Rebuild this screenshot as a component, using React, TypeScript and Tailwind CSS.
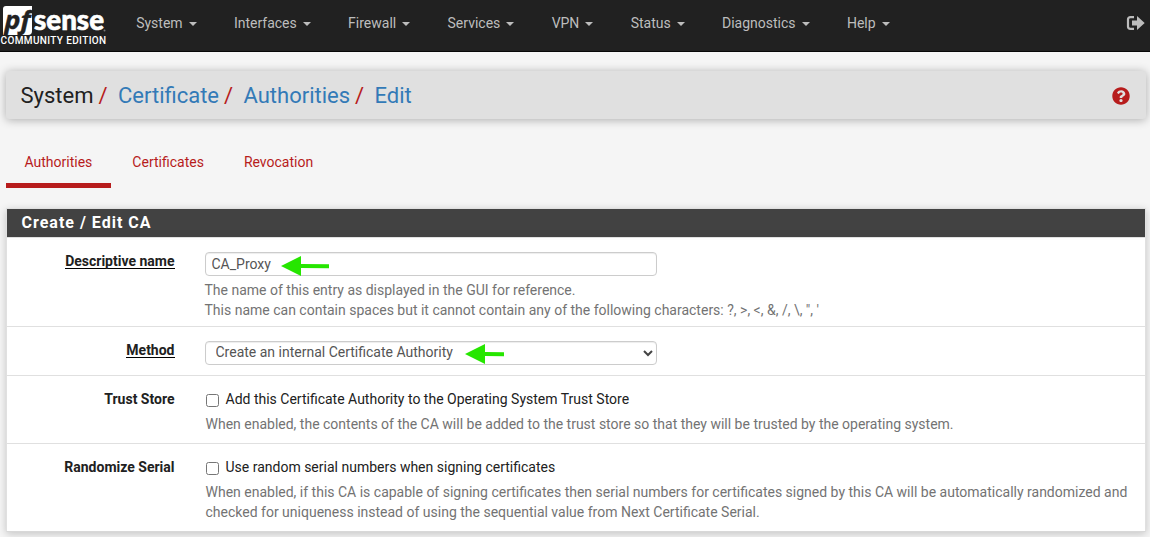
import type { ReactNode } from "react";

const menus = ["System", "Interfaces", "Firewall", "Services", "VPN", "Status", "Diagnostics", "Help"];

function Logo() {
  return (
    <div className="w-[117.500px] shrink-0 pt-[5px]">
      <svg className="block overflow-visible" width="110" height="31" viewBox="0 0 110 31">
        <path d="M6 1H32V26Q32 30 28 30H3V4Q3 1 6 1Z" fill="#fff" />
        <text x="4.500" y="24" fontFamily="Open Sans, sans-serif" fontSize="25" fontWeight="700" fontStyle="italic" fill="#212121" stroke="#212121" strokeWidth="0.400" textLength="26" lengthAdjust="spacingAndGlyphs">pf</text>
        <text x="34" y="24.500" fontFamily="Lato, sans-serif" fontSize="27.500" fontWeight="900" fill="#fff" stroke="#fff" strokeWidth="0.600" textLength="70" lengthAdjust="spacingAndGlyphs">sense</text>
        <circle cx="104.5" cy="25.5" r="1" fill="#777" />
      </svg>
      <div className="whitespace-nowrap pl-[0.500px] text-[10px] font-medium leading-[10px] tracking-[0.370px] text-white">COMMUNITY EDITION</div>
    </div>
  );
}

function Arrow({ className, end }: { className: string; end: number }) {
  return (
    <svg className={className} width="50" height="20" viewBox="0 0 50 20">
      <path d={`M0 10L20 0V8L${end} 8.3V12.3L20 12V20Z`} fill="#26e600" />
    </svg>
  );
}

function Row({ label, required, className, children }: { label: string; required?: boolean; className: string; children: ReactNode }) {
  return (
    <div className={`flex border-b border-[#e0e0e0] ${className}`}>
      <div className="w-[167.500px] shrink-0 text-right font-bold text-[#212121]">
        <span className={required ? "-mt-[1px] block h-[18px] w-fit ml-auto border-b border-black leading-[20px]" : ""}>{label}</span>
      </div>
      <div className="ml-[30.500px] flex-1 whitespace-nowrap">{children}</div>
    </div>
  );
}

function Check({ label }: { label: string }) {
  return (
    <label className="flex h-5 items-center text-[#212121]">
      <input type="checkbox" className="ml-[1px] mt-[2px] mr-[6.500px] h-[13px] w-[13px]" />
      {label}
    </label>
  );
}

export default function App() {
  return (
    <div className="h-[537px] overflow-hidden bg-[#f5f5f5] font-['Roboto',sans-serif] text-[14px] leading-[20px]">
      <nav className="flex h-[52px] border-b border-[#080808] bg-[#212121] text-[#bdbdbd]">
        <Logo />
        {menus.map((m) => (
          <a key={m} className="flex h-[46px] items-center px-[18.660px]">
            {m}
            <span className="ml-[6px] mt-[1px] border-x-4 border-t-4 border-x-transparent border-t-[#bdbdbd]" />
          </a>
        ))}
        <svg className="mt-[14px] ml-auto mr-[5px] h-[18px] w-[19px]" viewBox="0 0 19 18">
          <path d="M8 3.2H4.5Q2 3.2 2 5.5V12.5Q2 14.8 4.5 14.8H8" fill="none" stroke="#bdbdbd" strokeWidth="2.200" />
          <path d="M6 6.5H11V2L18.7 9L11 16V11.5H6Z" fill="#bdbdbd" />
        </svg>
      </nav>

      <header className="mx-[6px] mt-[19px] mr-[4px] flex h-[48px] items-center rounded-[3px] bg-[#e0e0e0] pl-[14.500px] pr-[16px] text-[22px] shadow-[0_1px_10px_rgba(0,0,0,0.3)]">
        <span className="mt-[2px] text-[#212121]">System</span>
        {["Certificate", "Authorities", "Edit"].map((c) => (
          <span key={c} className="mt-[2px] flex">
            <span className="ml-[5px] mr-[10.400px] text-[#b71c1c]">/</span>
            <a className="text-[#337ab7]">{c}</a>
          </span>
        ))}
        <svg className="ml-auto mt-[2px]" width="18" height="18" viewBox="0 0 512 512">
          <path fill="#b71c1c" d="M504 256c0 137-111 248-248 248S8 393 8 256C8 119.100 119 8 256 8s248 111.100 248 248zM262.700 90c-54.500 0-89.300 23-116.500 63.800-3.500 5.300-2.400 12.400 2.700 16.300l34.700 26.300c5.200 3.900 12.600 3 16.700-2.100 17.900-22.700 30.100-35.800 57.300-35.800 20.400 0 45.700 13.100 45.700 33 0 15-12.400 22.700-32.500 34C247.100 238.500 216 254.900 216 296v4c0 6.600 5.400 12 12 12h56c6.600 0 12-5.400 12-12v-1.300c0-28.500 83.200-29.600 83.200-106.700 0-58-60.200-102-116.500-102zM256 338c-25.400 0-46 20.600-46 46 0 25.400 20.600 46 46 46s46-20.600 46-46c0-25.400-20.600-46-46-46z" />
        </svg>
      </header>

      <div className="ml-[6px] mt-[17px] flex h-[52px] text-[#b71c1c]">
        {["Authorities", "Certificates", "Revocation"].map((t, i) => (
          <a key={t} className={`mr-[3px] px-[18.500px] pt-[16px] ${i === 0 ? "border-b-[5px] border-[#b71c1c]" : ""}`}>{t}</a>
        ))}
      </div>

      <main className="ml-[6px] mr-[4px] mt-[20px] border border-[#e0e0e0] border-b-[#d8d8d8] bg-white shadow-[0_2px_8px_rgba(0,0,0,0.2)]">
        <h2 className="h-[29px] border-b border-[#e0e0e0] bg-[#424242] pl-[14.500px] text-[16px] font-bold leading-[28px] tracking-[1px] text-white">Create / Edit CA</h2>
        <Row label="Descriptive name" required className="h-[89px] pt-[14px]">
          <div className="relative w-[452px]">
            <input defaultValue="CA_Proxy" className="block h-[24px] w-full rounded-[4px] border border-[#ccc] bg-white px-[5.500px] text-[#555] shadow-[inset_0_1px_1px_rgba(0,0,0,0.075)] outline-none" />
            <Arrow className="absolute left-[76px] top-[4px]" end={48} />
          </div>
          <p className="-ml-[0.500px] mt-[4px] text-[#737373]">
            The name of this entry as displayed in the GUI for reference.
            <br />
            This name can contain spaces but it cannot contain any of the following characters: ?, &gt;, &lt;, &amp;, /, \, ", '
          </p>
        </Row>
        <Row label="Method" required className="h-[49px] pt-[14px]">
          <div className="relative w-[452px]">
            <select className="block h-[24px] w-full appearance-none rounded-[4px] border border-[#ccc] bg-white pb-[2px] pl-[9.500px] text-[#555] shadow-[inset_0_1px_1px_rgba(0,0,0,0.075)] outline-none">
              <option>Create an internal Certificate Authority</option>
            </select>
            <svg className="absolute right-[4px] top-[9px]" width="10" height="7" viewBox="0 0 10 7">
              <path d="M1 1L5 5L9 1" fill="none" stroke="#444" strokeWidth="2" />
            </svg>
            <Arrow className="absolute left-[260px] top-[3px]" end={39} />
          </div>
        </Row>
        <Row label="Trust Store" className="h-[68px] pt-[13px]">
          <Check label="Add this Certificate Authority to the Operating System Trust Store" />
          <p className="mt-[5px] pl-[0.500px] text-[#737373]">When enabled, the contents of the CA will be added to the trust store so that they will be trusted by the operating system.</p>
        </Row>
        <Row label="Randomize Serial" className="h-[87px] border-b-0 pt-[13px]">
          <Check label="Use random serial numbers when signing certificates" />
          <p className="mt-[5px] pl-[0.500px] text-[#737373]">
            When enabled, if this CA is capable of signing certificates then serial numbers for certificates signed by this CA will be automatically randomized and
            <br />
            checked for uniqueness instead of using the sequential value from Next Certificate Serial.
          </p>
        </Row>
      </main>
    </div>
  );
}
